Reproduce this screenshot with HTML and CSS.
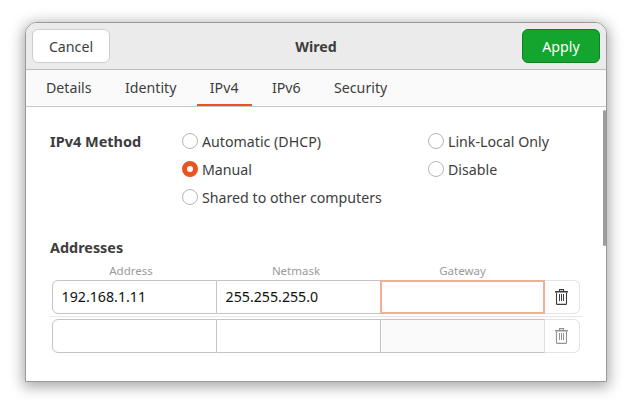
FILE: index.html
```html
<!DOCTYPE html>
<html lang="en">
<head>
<meta charset="utf-8">
<title>Wired</title>
<link rel="stylesheet" href="styles.css">
</head>
<body>
<div class="window">
  <header class="titlebar">
    <button class="btn btn-cancel">Cancel</button>
    <div class="title">Wired</div>
    <button class="btn btn-apply">Apply</button>
  </header>
  <nav class="tabs">
    <div class="tab">Details</div>
    <div class="tab">Identity</div>
    <div class="tab active">IPv4</div>
    <div class="tab">IPv6</div>
    <div class="tab">Security</div>
  </nav>
  <main class="content">
    <div class="scrollbar"></div>
    <section class="method">
      <div class="method-label">IPv4 Method</div>
      <div class="radio-col col-a">
        <div class="radio"><span class="dot"></span>Automatic (DHCP)</div>
        <div class="radio"><span class="dot on"></span>Manual</div>
        <div class="radio"><span class="dot"></span>Shared to other computers</div>
      </div>
      <div class="radio-col">
        <div class="radio"><span class="dot"></span>Link-Local Only</div>
        <div class="radio"><span class="dot"></span>Disable</div>
      </div>
    </section>
    <h2 class="section-label">Addresses</h2>
    <div class="col-heads">
      <div class="col-head">Address</div>
      <div class="col-head">Netmask</div>
      <div class="col-head">Gateway</div>
    </div>
    <div class="row">
      <div class="cell first">192.168.1.11</div>
      <div class="cell">255.255.255.0</div>
      <div class="cell focus"></div>
      <div class="trash">
        <svg width="13" height="16" viewBox="0 0 13 16" fill="none" stroke="#3d3d3d"><path d="M4.5 2V.6h4V2" stroke-width="1.2"/><path d="M.6 2.8h11.8" stroke-width="1.6" stroke-linecap="round"/><path d="M1.5 3.5v10.9a1 1 0 0 0 1 1h8a1 1 0 0 0 1-1V3.5" stroke-width="1.1"/><path d="M4.5 5v7M6.5 5v7M8.5 5v7" stroke-width="1"/></svg>
      </div>
    </div>
    <div class="sep"></div>
    <div class="row">
      <div class="cell first"></div>
      <div class="cell"></div>
      <div class="cell shaded"></div>
      <div class="trash">
        <svg width="13" height="16" viewBox="0 0 13 16" fill="none" stroke="#939393"><path d="M4.5 2V.6h4V2" stroke-width="1.2"/><path d="M.6 2.8h11.8" stroke-width="1.6" stroke-linecap="round"/><path d="M1.5 3.5v10.9a1 1 0 0 0 1 1h8a1 1 0 0 0 1-1V3.5" stroke-width="1.1"/><path d="M4.5 5v7M6.5 5v7M8.5 5v7" stroke-width="1"/></svg>
      </div>
    </div>
  </main>
</div>
</body>
</html>
```
FILE: styles.css
```css
* { box-sizing: border-box; }
html, body { margin: 0; height: 100%; }
body {
  background: #fff;
  padding: 22px 25px 0;
  font-family: "Noto Sans", sans-serif;
  font-size: 14.2px;
  color: #3d3d3d;
  overflow: hidden;
}
.window {
  width: 582px;
  height: 360px;
  background: #fff;
  border: 1px solid #9a9a9a;
  border-radius: 12px 12px 0 0;
  box-shadow: 0 3px 14px 2px rgba(0,0,0,.35);
  overflow: hidden;
}
.titlebar {
  height: 47px;
  background: #ebebeb;
  border-bottom: 1px solid #bdbdbd;
  padding: 6px;
  display: flex;
  align-items: center;
  justify-content: space-between;
}
.btn {
  width: 78px;
  height: 34px;
  border-radius: 6px;
  font: inherit;
  padding: 0;
}
.btn-cancel { background: #fff; border: 1px solid #cdcdcd; color: #3d3d3d; }
.btn-apply { background: #13a52e; border: 1px solid #0f7f23; color: #fff; }
.title { font-weight: 700; }
.tabs {
  height: 37px;
  background: #fafafa;
  border-bottom: 1px solid #c8c8c8;
  padding-left: 7px;
  display: flex;
  gap: 7.4px;
}
.tab {
  padding: 0 13px;
  height: 36px;
  line-height: 35px;
}
.tab.active { border-bottom: 2px solid #e95420; }
.content {
  position: relative;
  padding: 20px 24px 0 24px;
}
.scrollbar {
  position: absolute;
  right: 0;
  top: 3px;
  width: 3px;
  height: 136px;
  background: #9c9c9c;
  border-radius: 2px;
}
.method { display: flex; }
.method-label { width: 132px; height: 28px; line-height: 28px; font-weight: 700; font-size: 14.5px; }
.radio-col { display: flex; flex-direction: column; }
.col-a { width: 246px; }
.radio { height: 28px; display: flex; align-items: center; gap: 4px; }
.dot {
  width: 16px;
  height: 16px;
  border-radius: 50%;
  border: 1px solid #b5b5b5;
  background: #fff;
}
.dot.on { border: 5px solid #e95420; }
.section-label {
  margin: 27px 0 0;
  font-size: 14.4px;
  line-height: 20px;
  font-weight: 700;
}
.col-heads {
  display: grid;
  grid-template-columns: 162px 168px 165px;
  margin-top: 5px;
  height: 17px;
  font-size: 11.5px;
  line-height: 15px;
  color: #9a9a9a;
  text-align: center;
}
.row {
  display: flex;
  height: 34px;
  margin: 0 2px;
}
.cell {
  flex: none;
  width: 164px;
  border: 1px solid #c4c4c4;
  border-left: 0;
  padding-left: 8.6px;
  line-height: 32px;
  color: #111;
  background: #fff;
}
.cell.first {
  border-left: 1px solid #c4c4c4;
  border-radius: 6px 0 0 6px;
  width: 165px;
}
.cell.focus {
  width: 165px;
  margin-left: -1px;
  border: 2px solid #f2ae96;
}
.cell.shaded { background: #fafafa; border-right-color: #e0e0e0; }
.trash {
  flex: none;
  width: 35px;
  padding-right: 1px;
  border: 1px solid #e4e4e4;
  border-left: 0;
  border-radius: 0 6px 6px 0;
  display: flex;
  align-items: center;
  justify-content: center;
}
.sep {
  height: 1px;
  background: #e6e6e6;
  margin: 2px 0;
}
```
